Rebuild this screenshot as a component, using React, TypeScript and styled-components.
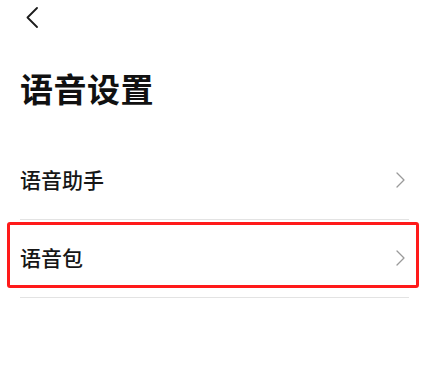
import React from "react";
import styled, { createGlobalStyle } from "styled-components";

const GlobalStyle = createGlobalStyle`
  html, body {
    margin: 0;
    padding: 0;
    background: #ffffff;
  }
  body {
    font-family: "Noto Sans CJK SC", "Noto Sans", sans-serif;
    color: #111111;
  }
`;

const Page = styled.div`
  width: 433px;
  height: 389px;
  background: #ffffff;
  overflow: hidden;
  display: flex;
  flex-direction: column;
`;

const TopBar = styled.div`
  height: 34px;
  display: flex;
  align-items: flex-start;
  padding: 7px 0 0 26px;
  box-sizing: border-box;
`;

const BackButton = styled.button`
  border: 0;
  background: transparent;
  padding: 0;
  width: 12px;
  height: 21px;
  display: flex;
  cursor: pointer;
`;

const Title = styled.h1`
  margin: 0;
  padding: 0 0 0 20px;
  height: 108px;
  display: flex;
  align-items: center;
  font-size: 33px;
  font-weight: 700;
  line-height: 1;
  letter-spacing: 0.5px;
  color: #111111;
  box-sizing: border-box;
  padding-top: 1px;
`;

const List = styled.div`
  display: flex;
  flex-direction: column;
  margin: 0 24px 0 20px;
`;

const Row = styled.div<{ highlighted?: boolean }>`
  position: relative;
  height: 78px;
  display: flex;
  align-items: center;
  justify-content: space-between;
  border-bottom: 1px solid #e3e3e3;
  box-sizing: border-box;
  cursor: pointer;
`;

const RowLabel = styled.span`
  font-size: 21px;
  font-weight: 500;
  line-height: 1;
  color: #161616;
  margin-top: -2px;
`;

const Chevron = styled.span`
  display: flex;
  margin-right: 4px;
  margin-top: -2px;
`;

const Highlight = styled.div`
  position: absolute;
  left: -13px;
  right: -10px;
  top: 2px;
  bottom: 9px;
  border: 3px solid #ff1a1a;
  border-radius: 3px;
  pointer-events: none;
`;

const items = [
  { label: "语音助手", highlighted: false },
  { label: "语音包", highlighted: true },
];

export default function App() {
  return (
    <>
      <GlobalStyle />
      <Page>
        <TopBar>
          <BackButton aria-label="返回">
            <svg width="12" height="21" viewBox="0 0 12 21" fill="none">
              <path
                d="M11 1 L1.5 10.5 L11 20"
                stroke="#1c1c1c"
                strokeWidth="1.8"
                strokeLinecap="round"
                strokeLinejoin="round"
              />
            </svg>
          </BackButton>
        </TopBar>
        <Title>语音设置</Title>
        <List>
          {items.map((item) => (
            <Row key={item.label} highlighted={item.highlighted}>
              <RowLabel>{item.label}</RowLabel>
              <Chevron>
                <svg width="9" height="16" viewBox="0 0 9 16" fill="none">
                  <path
                    d="M1 1 L8 8 L1 15"
                    stroke="#9a9a9a"
                    strokeWidth="1.3"
                    strokeLinecap="round"
                    strokeLinejoin="round"
                  />
                </svg>
              </Chevron>
              {item.highlighted && <Highlight />}
            </Row>
          ))}
        </List>
      </Page>
    </>
  );
}
